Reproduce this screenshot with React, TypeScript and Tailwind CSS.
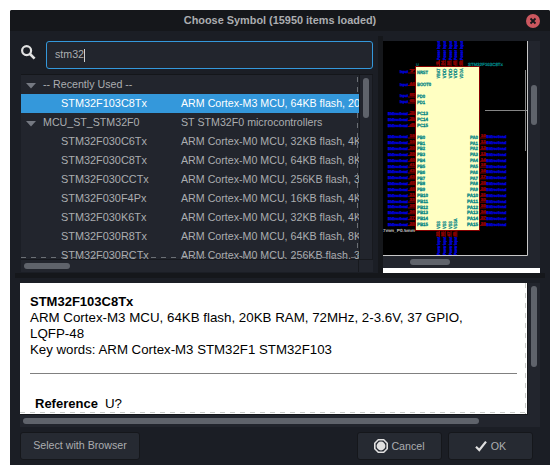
import React from "react";

const parts = [
  ["STM32F030C6Tx", "ARM Cortex-M0 MCU, 32KB flash, 4KB RAM"],
  ["STM32F030C8Tx", "ARM Cortex-M0 MCU, 64KB flash, 8KB RAM"],
  ["STM32F030CCTx", "ARM Cortex-M0 MCU, 256KB flash, 32KB RAM"],
  ["STM32F030F4Px", "ARM Cortex-M0 MCU, 16KB flash, 4KB RAM"],
  ["STM32F030K6Tx", "ARM Cortex-M0 MCU, 32KB flash, 4KB RAM"],
  ["STM32F030R8Tx", "ARM Cortex-M0 MCU, 64KB flash, 8KB RAM"],
  ["STM32F030RCTx", "ARM Cortex-M0 MCU, 256KB flash, 32KB RAM"],
];

function PartRow({ name, desc, selected }: { name: string; desc: string; selected?: boolean }) {
  return (
    <div className={`flex h-[19px] shrink-0 items-center whitespace-nowrap pl-10 ${selected ? "bg-[#3498db] text-white" : ""}`}>
      <span className="w-[120px] shrink-0 text-[10.9px]">{name}</span>
      <span className="pb-[2px]">{desc}</span>
    </div>
  );
}

function GroupRow({ name, desc }: { name: string; desc?: string }) {
  return (
    <div className="flex h-[19px] shrink-0 items-center whitespace-nowrap pl-[5px]">
      <svg className="mt-[3px] h-[6px] w-[10px]" viewBox="0 0 10 6">
        <path d="M0 0H10L5 5.5Z" fill="#757982" />
      </svg>
      <span className="ml-[7px] w-[138px] shrink-0 pb-[2px]">{name}</span>
      <span className="pb-[2px]">{desc}</span>
    </div>
  );
}

const leftPins: [string, string, string, number][] = [
  ["NRST", "7", "Input", 71.5],
  ["BOOT0", "44", "Input", 84],
  ["PD0", "5", "Input", 95.5],
  ["PD1", "6", "Input", 101.5],
  ["PC13", "2", "Bidirectional", 113],
  ["PC14", "3", "Bidirectional", 119],
  ["PC15", "4", "Bidirectional", 125],
];
const portB = ["18", "19", "20", "39", "40", "41", "42", "43", "45", "46", "21", "22", "25", "26", "27", "28"];
portB.forEach((n, i) => leftPins.push([`PB${i}`, n, "Bidirectional", 136.5 + i * 5.83]));
const portA = ["10", "11", "12", "13", "14", "15", "16", "17", "29", "30", "31", "32", "33", "34", "37", "38"];

function ChipPreview() {
  return (
    <svg
      className="block h-[215px] w-[145px] bg-black font-['Liberation_Sans',sans-serif] font-bold"
      viewBox="383 41 145 215"
      fontSize="4.8"
      textRendering="geometricPrecision"
    >
      <path d="M485 110.5H527" stroke="#858585" />
      <path d="M525.5 70V151" stroke="#858585" />
      <rect x="415.5" y="66.5" width="64" height="164" fill="#ffffc2" stroke="#840000" />
      {leftPins.map(([label, num, kind, y]) => (
        <g key={label}>
          <text x={kind === "Input" ? 400 : 388} y={y + 1.9} fill="#0000e8" stroke="#0000e8" strokeWidth=".3" fontSize="4" textLength={kind === "Input" ? 8 : 20} lengthAdjust="spacingAndGlyphs">{kind}</text>
          <path d={`M408 ${y + 1.5}H415`} stroke="#840000" />
          <text x="409.5" y={y + 0.8} fill="#840000" stroke="#840000" strokeWidth=".5" fontSize="4" textLength="5" lengthAdjust="spacingAndGlyphs">{num}</text>
          <text x="417" y={y + 2.2} fill="#008484" stroke="#008484" strokeWidth=".3" textLength={label === "BOOT0" ? 14 : label.length > 3 ? 11 : 8} lengthAdjust="spacingAndGlyphs">{label}</text>
        </g>
      ))}
      {portA.map((num, i) => {
        const y = 136.5 + i * 5.83;
        return (
          <g key={num}>
            <text x="478" y={y + 2.2} textAnchor="end" fill="#008484" stroke="#008484" strokeWidth=".3" textLength={i > 9 ? 11 : 8} lengthAdjust="spacingAndGlyphs">{`PA${i}`}</text>
            <path d={`M480 ${y + 1.5}H486`} stroke="#840000" />
            <text x="480.8" y={y + 0.8} fill="#840000" stroke="#840000" strokeWidth=".5" fontSize="4" textLength="5" lengthAdjust="spacingAndGlyphs">{num}</text>
            <text x="486.5" y={y + 1.9} fill="#0000e8" stroke="#0000e8" strokeWidth=".3" fontSize="4" textLength="20" lengthAdjust="spacingAndGlyphs">Bidirectional</text>
          </g>
        );
      })}
      {["VBAT", "VDD", "VDD", "VDD", "VDDA"].map((label, i) => {
        const x = 438.5 + i * 5.8;
        return (
          <g key={i}>
            <text transform={`translate(${x + 1.5} 60) rotate(-90)`} fill="#0000e8" stroke="#0000e8" strokeWidth=".3" fontSize="4" textLength="19" lengthAdjust="spacingAndGlyphs">Power input</text>
            <path d={`M${x + 1} 60V66`} stroke="#840000" />
            <text transform={`translate(${x} 65.5) rotate(-90)`} fill="#840000" stroke="#840000" strokeWidth=".5" fontSize="4" textLength="5" lengthAdjust="spacingAndGlyphs">{[1, 24, 36, 48, 9][i]}</text>
            <text transform={`translate(${x + 1.5} 78.5) rotate(-90)`} fill="#008484" stroke="#008484" strokeWidth=".2" textLength="10" lengthAdjust="spacingAndGlyphs">{label}</text>
          </g>
        );
      })}
      {["VSS", "VSS", "VSS", "VSSA"].map((label, i) => {
        const x = 438.5 + i * 5.8;
        return (
          <g key={i}>
            <text transform={`translate(${x + 1.5} 255) rotate(-90)`} fill="#0000e8" stroke="#0000e8" strokeWidth=".3" fontSize="4" textLength="18" lengthAdjust="spacingAndGlyphs">Power input</text>
            <path d={`M${x + 1} 231V237`} stroke="#840000" />
            <text transform={`translate(${x} 236.5) rotate(-90)`} fill="#840000" stroke="#840000" strokeWidth=".5" fontSize="4" textLength="5" lengthAdjust="spacingAndGlyphs">{[23, 35, 47, 8][i]}</text>
            <text transform={`translate(${x + 1.5} 229) rotate(-90)`} fill="#008484" stroke="#008484" strokeWidth=".2" textLength={i === 3 ? 10.5 : 8} lengthAdjust="spacingAndGlyphs">{label}</text>
          </g>
        );
      })}
      <text x="416" y="65.5" fill="#008484" fontSize="4">U</text>
      <text x="468" y="65.8" fill="#008484" stroke="#008484" strokeWidth=".2" fontSize="4.5" textLength="35" lengthAdjust="spacingAndGlyphs">STM32F103C8Tx</text>
      <text x="383" y="232" fill="#c2c2c2" fontSize="4.5" textLength="32" lengthAdjust="spacingAndGlyphs">7mm_P0.5mm</text>
      <path d="M383 255.5H527.5V41" fill="none" stroke="#c8c8c8" />
    </svg>
  );
}

export default function App() {
  return (
    <div className="h-[475px] w-[560px] bg-white p-[10px] font-['Liberation_Sans',Arial,sans-serif] text-[10.67px] text-[#abadb0]">
      <div className="flex h-[455px] w-[540px] flex-col overflow-hidden rounded-t-[2px] bg-[#1b1e25]">
        <header className="flex h-[21px] shrink-0 items-center bg-[#15171b] pl-[24px] pr-[10px]">
          <h1 className="flex-1 text-center text-[10.9px] font-bold">Choose Symbol (15950 items loaded)</h1>
          <svg className="h-[14px] w-[14px]" viewBox="0 0 14 14">
            <circle cx="7" cy="7" r="7" fill="#cb575f" />
            <path d="M4.5 4.5L9.5 9.5M9.5 4.5L4.5 9.5" stroke="#15171b" strokeWidth="1.8" />
          </svg>
        </header>

        <main className="flex h-[242px] shrink-0 pl-[5px]">
          <section className="flex w-[363px] flex-col pl-[5px] pt-[10px]">
            <div className="flex h-[28px] shrink-0">
              <svg className="ml-px mt-[4px] h-[15px] w-[15px]" viewBox="0 0 15 15" fill="none" stroke="#e2e2e2">
                <circle cx="5.6" cy="5.6" r="4.5" strokeWidth="2.2" />
                <path d="M9 9L13.6 13.6" strokeWidth="2.6" />
              </svg>
              <div className="ml-[10px] flex w-[327px] items-center rounded-[3px] border border-[#3498db] bg-[#22252d] pl-[8px]">
                <span className="pb-[2px]">stm32</span>
                <span className="h-[13px] w-px bg-[#d0d0d0]" />
              </div>
            </div>
            <div className="ml-px mt-[5px] flex h-[198px] w-[352px] flex-col border-t border-[#14161a] bg-[#22252d]">
              <div className="flex h-[184px] shrink-0">
                <div className="relative flex w-[338px] flex-col overflow-hidden">
                  <GroupRow name="-- Recently Used --" />
                  <PartRow name="STM32F103C8Tx" desc="ARM Cortex-M3 MCU, 64KB flash, 20KB RAM" selected />
                  <GroupRow name="MCU_ST_STM32F0" desc="ST STM32F0 microcontrollers" />
                  {parts.map(([name, desc]) => (
                    <PartRow key={name} name={name} desc={desc} />
                  ))}
                  <svg className="absolute inset-0 h-[184px] w-[338px]" viewBox="0 0 338 184" fill="none" stroke="#6b6f74" strokeDasharray="5 5">
                    <path d="M336.5 2V19M336.5 38V184M0 182.5H338" />
                  </svg>
                </div>
                <div className="flex w-[14px] justify-center border-x border-[#17191e] pt-[3px]">
                  <div className="h-[40px] w-[6px] rounded-full bg-[#5f636b]" />
                </div>
              </div>
              <div className="flex h-[13px] border-t border-[#17191e]">
                <div className="w-[338px] border-r border-[#17191e] pl-[3px] pt-[3px]">
                  <div className="h-[6px] w-[46px] rounded-full bg-[#5f636b]" />
                </div>
              </div>
            </div>
          </section>
          <section className="w-[162px] pt-[5px]">
            <div className="flex h-[237px] bg-[#15171b] pl-[5px]">
              <div className="flex w-[157px] flex-col bg-[#1b1e25] pt-[5px]">
                <div className="flex h-[215px] bg-[#22252d]">
                  <ChipPreview />
                  <div className="pl-[3px] pt-[44px]">
                    <div className="h-[40px] w-[6px] rounded-full bg-[#5f636b]" />
                  </div>
                </div>
                <div className="h-[12px] bg-[#22252d] pl-[27px] pt-[3px]">
                  <div className="h-[6px] w-[40px] rounded-full bg-[#5f636b]" />
                </div>
                <div className="h-[5px] bg-white" />
              </div>
            </div>
          </section>
        </main>

        <div className="mx-[5px] h-[5px] shrink-0 bg-[#15171b]" />

        <section className="ml-[10px] mt-[5px] flex h-[144px] w-[520px] shrink-0 flex-col bg-[#22252d]">
          <div className="flex h-[131px]">
            <article className="relative w-[507px] bg-white pl-[10px] pt-[11px] text-[13.333px] leading-[16px] text-black">
              <h2 className="text-[13px] font-bold">STM32F103C8Tx</h2>
              <p>ARM Cortex-M3 MCU, 64KB flash, 20KB RAM, 72MHz, 2-3.6V, 37 GPIO,<br />LQFP-48</p>
              <p className="text-[13.25px]">Key words: ARM Cortex-M3 STM32F1 STM32F103</p>
              <div className="mt-[15px] h-px w-[487px] bg-[#808080]" />
              <p className="mt-[22px] flex gap-[7px] pl-[5px]">
                <b className="text-[13px]">Reference</b>
                <span>U?</span>
              </p>
              <svg className="absolute inset-0 h-[131px] w-[507px]" viewBox="0 0 507 131" fill="none" stroke="#c9ccc9" strokeDasharray="5 5">
                <path d="M505.5 0V131M0 129.5H507" />
              </svg>
            </article>
            <div className="border-l border-[#15171b] pl-[3px] pt-[3px]">
              <div className="h-[81px] w-[6px] rounded-full bg-[#5f636b]" />
            </div>
          </div>
          <div className="h-[13px] w-[508px] border-t border-[#15171b] pl-[3px] pt-[3px]">
            <div className="h-[6px] w-[456px] rounded-full bg-[#5f636b]" />
          </div>
        </section>

        <footer className="ml-[10px] mt-[5px] flex h-[28px] shrink-0">
          <button className="w-[120px] rounded-[3px] border border-[#15171b] bg-[#262a32] pb-[2px]">Select with Browser</button>
          <button className="ml-[217px] flex w-[85px] items-center justify-center gap-[3px] rounded-[3px] border border-[#15171b] bg-[#262a32]">
            <svg className="h-[14px] w-[14px]" viewBox="0 0 14 14">
              <path d="M4.3 .8H9.7L13.2 4.3V9.7L9.7 13.2H4.3L.8 9.7V4.3Z" fill="none" stroke="#e0e0e0" strokeWidth="1.6" />
              <circle cx="7" cy="7" r="4.4" fill="#e0e0e0" />
            </svg>
            Cancel
          </button>
          <button className="ml-[6px] flex w-[85px] items-center justify-center gap-[4px] rounded-[3px] border border-[#15171b] bg-[#262a32]">
            <svg className="h-[12px] w-[12px]" viewBox="0 0 12 12">
              <path d="M1 6.8L4.3 10L11 1.6" fill="none" stroke="#e0e0e0" strokeWidth="2.2" />
            </svg>
            OK
          </button>
        </footer>
      </div>
    </div>
  );
}
